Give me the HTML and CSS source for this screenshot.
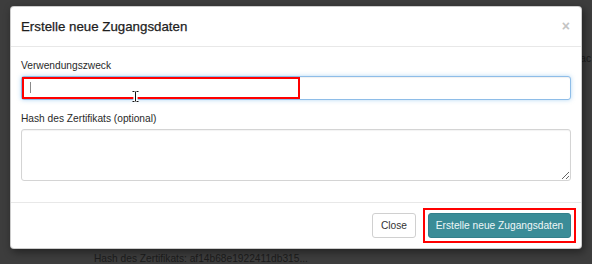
FILE: index.html
```html
<!DOCTYPE html>
<html lang="de">
<head>
    <meta charset="UTF-8">
    <meta name="viewport" content="width=device-width, initial-scale=1.0">
    <title>Zugangsdaten</title>
    <link rel="stylesheet" href="styles.css">
</head>
<body>
    <!-- page behind the backdrop -->
    <div class="page">
        <p class="page-line top-line">Verwendungszweck: Backup Server Buchhaltung ac</p>
        <p class="page-line bottom-line">Hash des Zertifikats: af14b68e1922411db315...</p>
    </div>

    <div class="modal">
        <div class="modal-header">
            <h4 class="modal-title">Erstelle neue Zugangsdaten</h4>
            <button class="close" type="button">&times;</button>
        </div>
        <div class="modal-body">
            <div class="form-group">
                <label for="purpose">Verwendungszweck</label>
                <div class="field">
                    <input type="text" id="purpose" class="form-control focused">
                    <span class="caret"></span>
                    <span class="mark mark-input"></span>
                    <svg class="ibeam" width="9" height="13" viewBox="0 0 9 13">
                        <path d="M1.5 1.5h2v10h-2M7.5 1.5h-2v10h2M3.5 1.5h2M3.5 11.5h2M4.5 1.5v10" fill="none" stroke="#fff" stroke-width="2.2"/>
                        <path d="M1.5 1.5h2M5.5 1.5h2M1.5 11.5h2M5.5 11.5h2M4.5 1.5v10" fill="none" stroke="#111" stroke-width="1"/>
                    </svg>
                </div>
            </div>
            <div class="form-group">
                <label for="hash">Hash des Zertifikats (optional)</label>
                <textarea id="hash" class="form-control"></textarea>
            </div>
        </div>
        <div class="modal-footer">
            <button class="btn btn-default" type="button">Close</button>
            <div class="btn-wrap">
                <button class="btn btn-primary" type="button">Erstelle neue Zugangsdaten</button>
                <span class="mark mark-btn"></span>
            </div>
        </div>
    </div>
</body>
</html>
```

FILE: styles.css
```css
* {
    box-sizing: border-box;
}

body {
    margin: 0;
    height: 264px;
    overflow: hidden;
    background: #3d3d3d;
    font-family: "Liberation Sans", Arial, sans-serif;
    font-size: 10.2px;
    color: #333;
    position: relative;
}

.page {
    padding-left: 94px;
}

.page-line {
    margin: 0;
    color: #1c1c1c;
    white-space: nowrap;
    line-height: 14px;
}

.top-line {
    padding-top: 52px;
    padding-right: 1px;
    text-align: right;
}

.bottom-line {
    padding-top: 186px;
}

.modal {
    position: absolute;
    top: 6px;
    left: 10px;
    width: 572px;
    height: 243px;
    background: #fff;
    border: 1px solid rgba(0, 0, 0, 0.2);
    border-radius: 4px;
    box-shadow: 2px 3px 8px rgba(0, 0, 0, 0.45);
    display: flex;
    flex-direction: column;
}

.modal-header {
    height: 40px;
    padding: 0 11px 0 10px;
    border-bottom: 1px solid #e8e8e8;
    display: flex;
    align-items: center;
    justify-content: space-between;
}

.modal-title {
    margin: 0;
    font-size: 13.3px;
    font-weight: normal;
    color: #1e1e1e;
    line-height: 18px;
    -webkit-text-stroke: 0.25px #1e1e1e;
}

.close {
    border: none;
    background: none;
    padding: 0;
    font-family: "Liberation Sans", Arial, sans-serif;
    font-size: 14px;
    font-weight: bold;
    color: #c4c4c4;
    line-height: 1;
    margin-top: -2px;
}

.modal-body {
    padding: 11px 10px 0 10px;
    flex: 1;
}

.form-group {
    margin-bottom: 11px;
}

.form-group label {
    display: block;
    line-height: 15px;
    margin-bottom: 3px;
    color: #2a2a2a;
}

.field {
    position: relative;
}

.form-control {
    display: block;
    width: 100%;
    border: 1px solid #d4d4d4;
    border-radius: 3px;
    background: #fff;
    font-family: inherit;
    font-size: 10.2px;
    outline: none;
    box-shadow: inset 0 1px 1px rgba(0, 0, 0, 0.05);
}

input.form-control {
    height: 24px;
}

.form-control.focused {
    border-color: #8ebde8;
    box-shadow: inset 0 1px 1px rgba(0, 0, 0, 0.06), 0 0 4px rgba(102, 175, 233, 0.5);
}

textarea.form-control {
    height: 52px;
    resize: vertical;
}

.caret {
    position: absolute;
    left: 9px;
    top: 6px;
    width: 1px;
    height: 11px;
    background: #8a8a8a;
}

.mark {
    position: absolute;
    border: 2px solid #ff0000;
    pointer-events: none;
}

.mark-input {
    left: 1px;
    top: 1px;
    width: 278px;
    height: 22px;
}

.ibeam {
    position: absolute;
    left: 110px;
    top: 14px;
}

.modal-footer {
    border-top: 1px solid #e8e8e8;
    padding: 10px 10px 10px 11px;
    display: flex;
    justify-content: flex-end;
    align-items: center;
    gap: 12px;
}

.btn {
    height: 25px;
    border-radius: 3px;
    font-family: inherit;
    font-size: 10.2px;
    padding: 0;
    white-space: nowrap;
    cursor: pointer;
}

.btn-default {
    width: 44px;
    background: #fff;
    border: 1px solid #d0d0d0;
    color: #333;
}

.btn-wrap {
    position: relative;
}

.btn-primary {
    display: block;
    width: 143px;
    background: #3a8c97;
    border: 1px solid #33808b;
    color: #eef7f8;
}

.mark-btn {
    left: -5px;
    top: -5px;
    width: 153px;
    height: 35px;
}
```
